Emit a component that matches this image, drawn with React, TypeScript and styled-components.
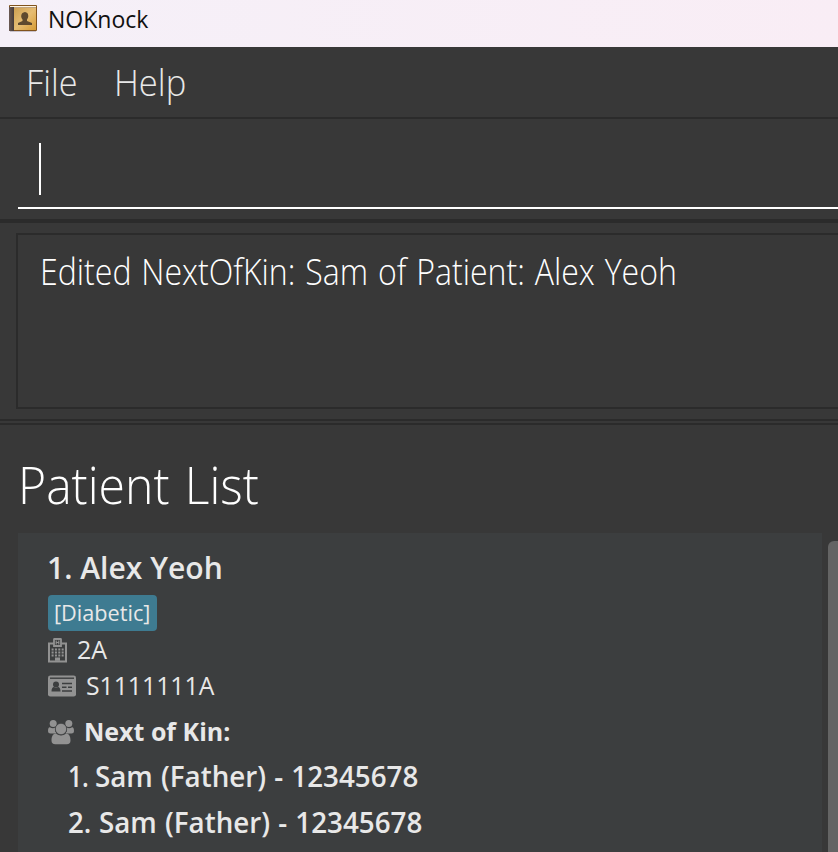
import React from "react";
import styled, { createGlobalStyle } from "styled-components";

const GlobalStyle = createGlobalStyle`
  * { box-sizing: border-box; }
  body {
    margin: 0;
    background: #383838;
    font-family: "Open Sans", "Noto Sans", sans-serif;
    overflow: hidden;
  }
`;

const Window = styled.div`
  width: 100%;
  height: 852px;
  display: flex;
  flex-direction: column;
  overflow: hidden;
  background: #383838;
`;

const TitleBar = styled.header`
  flex: none;
  height: 47px;
  padding: 4px 0 0 8px;
  display: flex;
  align-items: flex-start;
  gap: 10px;
  color: #111;
  background: linear-gradient(90deg, #f5f0f8, #f9edf5);
`;

const Label = styled.span<{
  $size: number;
  $line: number;
  $weight?: number;
  $stretch?: number;
  $word?: number;
}>`
  display: block;
  white-space: pre;
  font-size: ${(p) => p.$size}px;
  line-height: ${(p) => p.$line}px;
  font-weight: ${(p) => p.$weight ?? 400};
  word-spacing: ${(p) => p.$word ?? 0}px;
  transform: scaleX(${(p) => p.$stretch ?? 1});
  transform-origin: left;
`;

const MenuBar = styled.nav`
  flex: none;
  height: 72px;
  display: flex;
  gap: 34px;
  padding: 2px 0 0 26px;
  color: #e8e8e8;
  border-bottom: 2px solid #2b2b2b;
`;

const CommandPane = styled.div`
  flex: none;
  height: 104px;
  padding: 14px 0 0 18px;
  border-bottom: 4px solid #2b2b2b;
`;

const CommandField = styled.div`
  height: 76px;
  padding: 10px 0 0 21px;
  border-bottom: 2px solid #fff;
`;

const Caret = styled.div`
  width: 2px;
  height: 52px;
  background: #fff;
`;

const ResultPane = styled.div`
  flex: none;
  height: 198px;
  padding: 10px 0 0 16px;
  border-bottom: 2px solid #2b2b2b;
`;

const ResultBox = styled.div`
  height: 176px;
  padding: 15px 0 0 22px;
  border: 2px solid #2b2b2b;
  border-right: 0;
  color: #fff;
`;

const ListPane = styled.main`
  flex: 1;
  margin-top: 2px;
  padding: 23px 0 0 18px;
  border-top: 2px solid #2b2b2b;
  color: #fff;
`;

const ListRow = styled.div`
  display: flex;
  margin-top: 13px;
  justify-content: space-between;
`;

const Card = styled.article`
  width: 804px;
  height: 330px;
  padding: 14px 0 0 29px;
  background: #3c3e3f;
  color: #e8e8e8;
`;

const ScrollThumb = styled.div`
  width: 10px;
  height: 330px;
  margin-top: 8px;
  border-radius: 6px 0 0 0;
  background: #646464;
`;

const Tag = styled.div`
  width: 109px;
  height: 36px;
  margin: 8px 0 0 1px;
  padding-left: 6px;
  border-radius: 4px;
  background: #3e7b91;
`;

const Detail = styled.div<{ $gap: number; $height: number; $top?: number }>`
  display: flex;
  align-items: flex-start;
  height: ${(p) => p.$height}px;
  margin-top: ${(p) => p.$top ?? 0}px;
  padding-left: 1px;
  gap: ${(p) => p.$gap}px;
`;

const KinList = styled.div`
  padding: 2px 0 0 21px;
`;

const KinRow = styled.div`
  display: flex;
`;

const KinIndex = styled.div<{ $width: number }>`
  flex: none;
  width: ${(p) => p.$width}px;
`;

const BookIcon = () => (
  <svg width="30" height="30" viewBox="0 0 30 30">
    <defs>
      <linearGradient id="cover" x1="0" y1="0" x2="1" y2="1">
        <stop offset="0" stopColor="#cda052" />
        <stop offset=".5" stopColor="#e6bd73" />
        <stop offset="1" stopColor="#d69c36" />
      </linearGradient>
      <linearGradient id="spine" x1="0" x2="1">
        <stop offset="0" stopColor="#6b5a53" />
        <stop offset="1" stopColor="#453b39" />
      </linearGradient>
    </defs>
    <path d="M2 27.5H28" stroke="#c9c2cb" strokeWidth="1" />
    <rect x="1" y="1" width="28" height="26" rx="1" fill="#81531c" />
    <rect x="2" y="2" width="26" height="1.5" fill="#fff4df" />
    <rect x="6" y="4" width="22" height="22" fill="url(#cover)" />
    <rect x="1" y="3" width="5" height="24" fill="url(#spine)" />
    <path d="M10 21v-2l4.5-2v-1.5c-2-2-2-7 2.500-7.500 4 .5 4 5.500 2 7.500v1.500l5 2v2z" fill="#5e492e" />
  </svg>
);

const IconSlot = styled.span<{ $top: number }>`
  display: flex;
  margin-top: ${(p) => p.$top}px;
`;

const HospitalIcon = () => (
  <svg width="19" height="25" viewBox="0 0 19 25" fill="none" stroke="#929292">
    <path d="M6 5.500H1V23.500H18V5.500H13" strokeWidth="2" />
    <path d="M6 8V1.300Q6 1 6.400 1H12.600Q13 1 13 1.300V8Z" strokeWidth="1.800" />
    <path d="M8.200 2.500v4M10.800 2.500v4M8.200 4.500h2.600" strokeWidth="1.100" />
    <path d="M3.600 11.500h13M3.600 14.500h13M3.600 17.500h13" strokeWidth="2" strokeDasharray="2 1.350" />
    <path d="M7 22.800V19.500h5v3.300z" fill="#929292" stroke="none" />
  </svg>
);

const IdCardIcon = () => (
  <svg width="28" height="22" viewBox="0 0 28 22">
    <rect x="0" y="0.500" width="28" height="21" rx="2.300" fill="#929292" />
    <path d="M2 3.200H26" stroke="#3c3e3f" strokeWidth="1.400" />
    <circle cx="8" cy="9.500" r="3" fill="#3c3e3f" />
    <path d="M3.500 16.500c0-3 1-4.500 2.500-4.500q2 1.500 4 0c1.500 0 2.500 1.500 2.500 4.500z" fill="#3c3e3f" />
    <path d="M14 8.400H24M14 12.200H18.500M20 12.200H24M14 16H24" stroke="#3c3e3f" strokeWidth="1.500" />
  </svg>
);

const GroupIcon = () => (
  <svg width="26" height="26" viewBox="0 0 26 26" fill="#929292">
    <circle cx="5.200" cy="4.600" r="3.500" />
    <circle cx="20.800" cy="4.600" r="3.500" />
    <path d="M1.800 8.300q3 1.500 5.500.3a6.500 6.500 0 0 0 1.200 6H2.500Q0 14.500 0 12.200 0 8.300 1.800 8.300zM24.200 8.300q-3 1.500-5.500.3a6.500 6.500 0 0 1-1.200 6h6q2.500-.1 2.500-2.400 0-3.900-1.800-3.900z" />
    <path d="M7.700 14.400q5.300 4 10.600 0c3 .2 4.200 3.200 4.200 7.100q0 3.800-3.800 3.800H7.300q-3.800 0-3.800-3.800c0-3.900 1.200-6.900 4.200-7.100z" />
    <circle cx="13" cy="10" r="5.700" stroke="#3c3e3f" strokeWidth=".7" />
  </svg>
);

const kin = [
  { index: "1.", indexWidth: 27, stretch: 0.85, text: "Sam (Father) - 12345678" },
  { index: "2.", indexWidth: 31, stretch: 0.95, text: "Sam (Father) - 12345678" },
];

export default function App() {
  return (
    <Window>
      <GlobalStyle />
      <TitleBar>
        <BookIcon />
        <Label $size={23} $line={31}>NOKnock</Label>
      </TitleBar>
      <MenuBar>
        <Label $size={36} $line={68} $weight={300} $stretch={0.95}>File</Label>
        <Label $size={36} $line={68} $weight={300} $stretch={0.96}>Help</Label>
      </MenuBar>
      <CommandPane>
        <CommandField>
          <Caret />
        </CommandField>
      </CommandPane>
      <ResultPane>
        <ResultBox>
          <Label $size={36} $line={44} $weight={300} $stretch={0.891} $word={1.7}>
            Edited NextOfKin: Sam of Patient: Alex Yeoh
          </Label>
        </ResultBox>
      </ResultPane>
      <ListPane>
        <Label $size={52} $line={72} $weight={300} $stretch={0.925} $word={3}>Patient List</Label>
        <ListRow>
          <Card>
            <Label $size={31} $line={40} $weight={600} $stretch={0.97}>1. Alex Yeoh</Label>
            <Tag>
              <Label $size={22} $line={35} $weight={500} $stretch={0.985}>[Diabetic]</Label>
            </Tag>
            <Detail $gap={10} $height={38}>
              <IconSlot $top={7}><HospitalIcon /></IconSlot>
              <Label $size={25} $line={37}>2A</Label>
            </Detail>
            <Detail $gap={10} $height={36}>
              <IconSlot $top={6}><IdCardIcon /></IconSlot>
              <Label $size={25} $line={33} $stretch={0.99}>S1111111A</Label>
            </Detail>
            <Detail $gap={10} $height={38} $top={8}>
              <IconSlot $top={6}><GroupIcon /></IconSlot>
              <Label $size={25} $line={37} $weight={700}>Next of Kin:</Label>
            </Detail>
            <KinList>
              {kin.map((k) => (
                <KinRow key={k.index}>
                  <KinIndex $width={k.indexWidth}>
                    <Label $size={29} $line={46} $weight={600} $stretch={k.stretch}>{k.index}</Label>
                  </KinIndex>
                  <Label $size={29} $line={46} $weight={600} $stretch={0.957} $word={1}>{k.text}</Label>
                </KinRow>
              ))}
            </KinList>
          </Card>
          <ScrollThumb />
        </ListRow>
      </ListPane>
    </Window>
  );
}
